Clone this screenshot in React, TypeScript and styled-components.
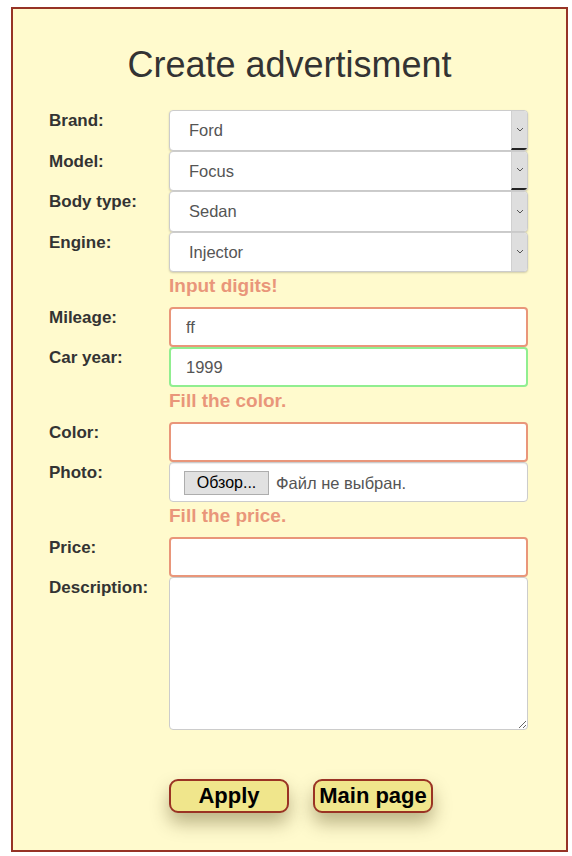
import React from 'react'
import styled, { createGlobalStyle } from 'styled-components'

const GlobalStyle = createGlobalStyle`
  body {
    margin: 0;
    background: #fff;
    font-family: "Liberation Sans", Arial, sans-serif;
  }
`

const Panel = styled.div`
  box-sizing: border-box;
  margin: 7px 4px 0 11px;
  height: 845px;
  border: 2px solid #963326;
  background: #fffacd;
  padding-top: 36px;
`

const Title = styled.h1`
  margin: 0 0 25px;
  text-align: center;
  font-weight: normal;
  font-size: 36px;
  line-height: 40px;
  color: #333;
`

const Form = styled.form`
  width: 479px;
  margin: 0 0 0 36px;
  display: grid;
  grid-template-columns: 120px 359px;
  align-items: start;
`

const Label = styled.label`
  padding-top: 1px;
  font-weight: bold;
  font-size: 17px;
  line-height: 19px;
  color: #333;
`

const SelectBox = styled.div`
  box-sizing: border-box;
  display: flex;
  height: 40.5px;
  border: 1px solid #ccc;
  border-radius: 4px;
  background: #fff;
  overflow: hidden;
  box-shadow: 0 1px 2px rgba(0, 0, 0, 0.18);
`

const Select = styled.select`
  flex: 1;
  appearance: none;
  border: none;
  outline: none;
  background: transparent;
  padding-left: 19px;
  font-family: inherit;
  font-size: 16.5px;
  color: #555;
`

const Arrow = styled.div<{ $mark?: boolean }>`
  box-sizing: border-box;
  width: 16px;
  display: flex;
  align-items: center;
  justify-content: center;
  background: #dedede;
  border-left: 1px solid #d0d0d0;
  border-bottom: ${(p) => (p.$mark ? '2px solid #222' : 'none')};
`

const Input = styled.input<{ $state?: 'bad' | 'ok' }>`
  box-sizing: border-box;
  width: 100%;
  height: 40px;
  padding: 0 15px;
  border: 2px solid
    ${(p) => (p.$state === 'bad' ? '#e9967a' : p.$state === 'ok' ? '#90ee90' : '#ccc')};
  border-radius: 4px;
  background: #fff;
  outline: none;
  font-family: inherit;
  font-size: 16.5px;
  color: #555;
`

const ErrorText = styled.div`
  grid-column: 2;
  padding-bottom: 7px;
  font-weight: bold;
  font-size: 19px;
  line-height: 28px;
  color: #e9967a;
`

const FileBox = styled.div`
  box-sizing: border-box;
  height: 40px;
  display: flex;
  align-items: center;
  gap: 7px;
  padding-left: 14px;
  border: 1px solid #ccc;
  border-radius: 4px;
  background: #fff;
  box-shadow: inset 0 1px 1px rgba(0, 0, 0, 0.075);
`

const FileButton = styled.button`
  box-sizing: border-box;
  width: 85px;
  height: 24px;
  margin-top: 2px;
  padding: 0;
  border: 1px solid #adadad;
  background: #e1e1e1;
  font-family: "Liberation Sans", Arial, sans-serif;
  font-size: 16px;
  color: #000;
`

const FileName = styled.span`
  margin-top: 2px;
  font-size: 16.5px;
  color: #555;
`

const TextArea = styled.textarea`
  box-sizing: border-box;
  width: 100%;
  height: 153px;
  border: 1px solid #ccc;
  border-radius: 4px;
  background: #fff;
  resize: vertical;
  outline: none;
  display: block;
`

const Buttons = styled.div`
  grid-column: 2;
  display: flex;
  gap: 24px;
  margin-top: 49px;
`

const ActionButton = styled.button`
  box-sizing: border-box;
  width: 120px;
  height: 34px;
  padding: 0;
  border: 2px solid #9a3324;
  border-radius: 9px;
  background: #f0e68c;
  font-family: "Liberation Sans", Arial, sans-serif;
  font-weight: bold;
  font-size: 22px;
  color: #000;
  white-space: nowrap;
  box-shadow: 0 10px 18px rgba(60, 50, 0, 0.35);
`

const Chevron = () => (
  <svg width="8" height="5" viewBox="0 0 8 5">
    <path d="M1 1l3 3 3-3" fill="none" stroke="#555" strokeWidth="1" />
  </svg>
)

const selects = [
  { label: 'Brand:', value: 'Ford', mark: true },
  { label: 'Model:', value: 'Focus', mark: true },
  { label: 'Body type:', value: 'Sedan', mark: false },
  { label: 'Engine:', value: 'Injector', mark: false },
]

const App = () => {
  return (
    <>
      <GlobalStyle />
      <Panel>
        <Title>Create advertisment</Title>
        <Form onSubmit={(e) => e.preventDefault()}>
          {selects.map((s) => (
            <React.Fragment key={s.label}>
              <Label>{s.label}</Label>
              <SelectBox>
                <Select defaultValue={s.value}>
                  <option>{s.value}</option>
                </Select>
                <Arrow $mark={s.mark}>
                  <Chevron />
                </Arrow>
              </SelectBox>
            </React.Fragment>
          ))}

          <ErrorText>Input digits!</ErrorText>
          <Label>Mileage:</Label>
          <Input $state="bad" defaultValue="ff" />
          <Label>Car year:</Label>
          <Input $state="ok" defaultValue="1999" />

          <ErrorText>Fill the color.</ErrorText>
          <Label>Color:</Label>
          <Input $state="bad" />
          <Label>Photo:</Label>
          <FileBox>
            <FileButton type="button">Обзор...</FileButton>
            <FileName>Файл не выбран.</FileName>
          </FileBox>

          <ErrorText>Fill the price.</ErrorText>
          <Label>Price:</Label>
          <Input $state="bad" />
          <Label>Description:</Label>
          <TextArea />

          <Buttons>
            <ActionButton type="submit">Apply</ActionButton>
            <ActionButton type="button">Main page</ActionButton>
          </Buttons>
        </Form>
      </Panel>
    </>
  )
}

export default App
